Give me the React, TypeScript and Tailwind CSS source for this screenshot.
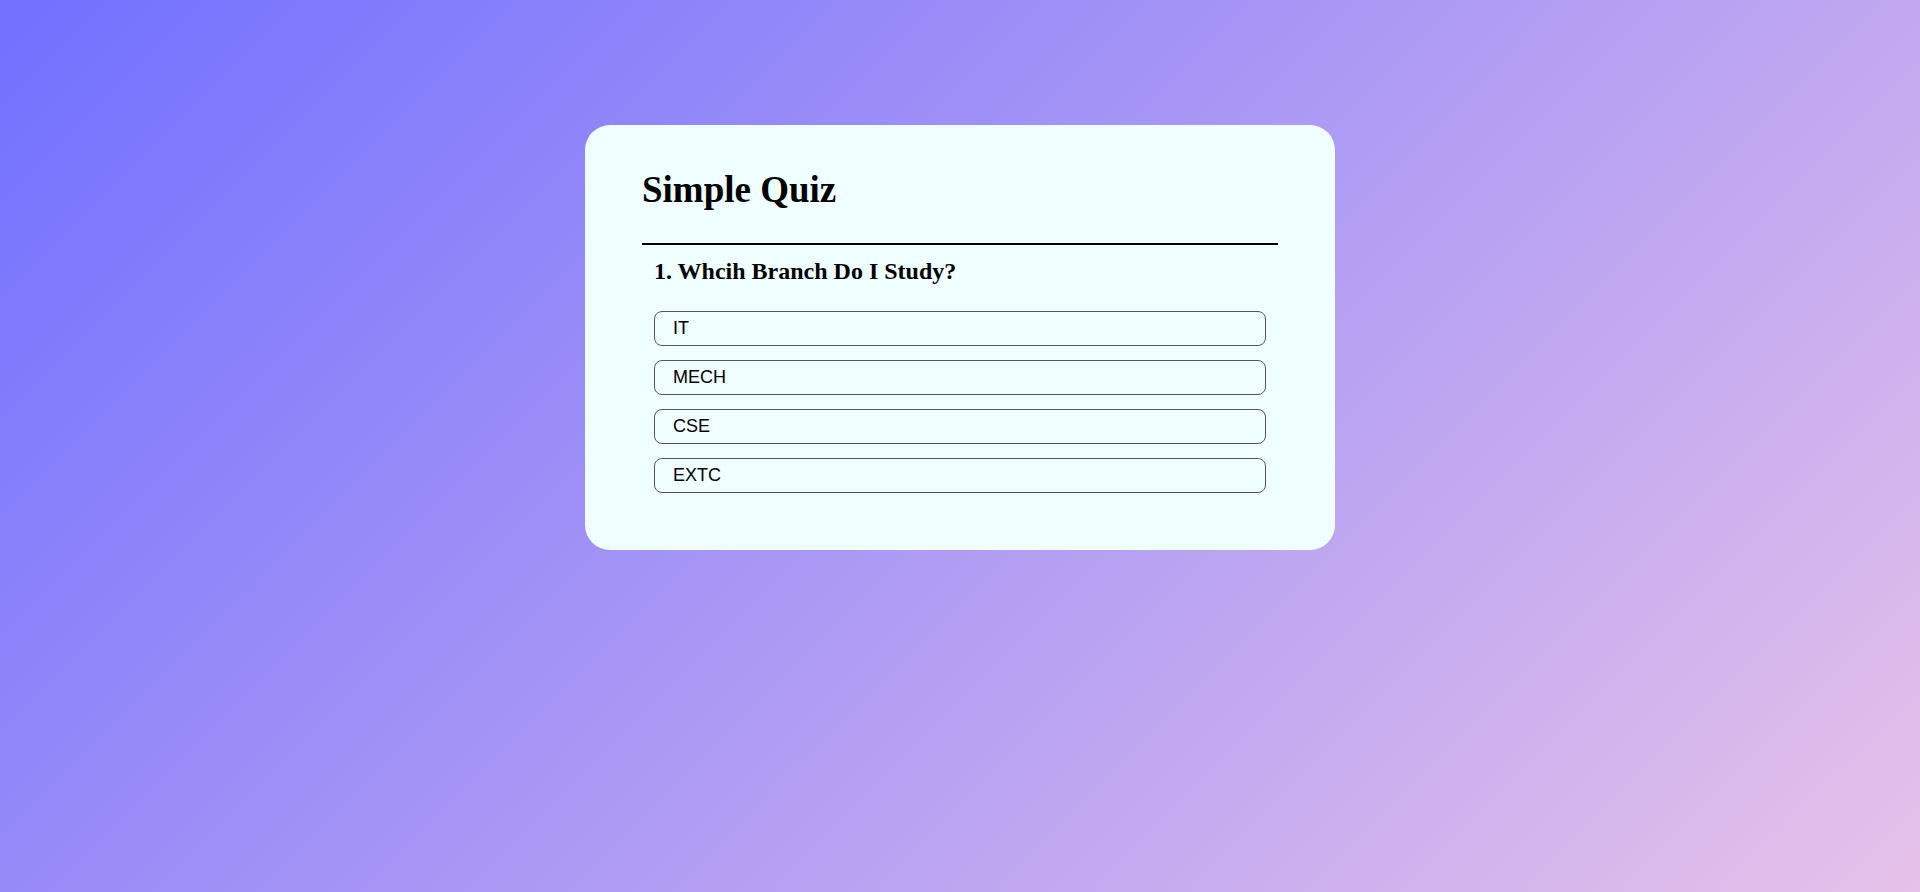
const options = ['IT', 'MECH', 'CSE', 'EXTC']

export default function App() {
  return (
    <div className="min-h-screen w-full bg-[linear-gradient(135deg,#7170ff,#e6c2e9)] pt-[125px]">
      <div className="mx-auto w-[750px] rounded-[25px] bg-[#f0ffff] px-[57px] pt-[44px] pb-[57px]">
        <h1 className="font-['Liberation_Serif',serif] text-[37px] leading-[42px] font-bold text-black">
          Simple Quiz
        </h1>
        <div className="mt-[32px] h-[2px] bg-black" />

        <div className="px-[12px] pt-[13px]">
          <h2 className="font-['Liberation_Serif',serif] text-[24px] leading-[27px] font-bold text-black">
            1. Whcih Branch Do I Study?
          </h2>
          <div className="mt-[26px] flex flex-col gap-[14px]">
            {options.map((opt) => (
              <button
                key={opt}
                className="h-[35px] w-full rounded-[8px] border border-[#555555] bg-[#f0ffff] pl-[18px] text-left font-['Liberation_Sans',sans-serif] text-[18px] text-black"
              >
                {opt}
              </button>
            ))}
          </div>
        </div>
      </div>
    </div>
  )
}
